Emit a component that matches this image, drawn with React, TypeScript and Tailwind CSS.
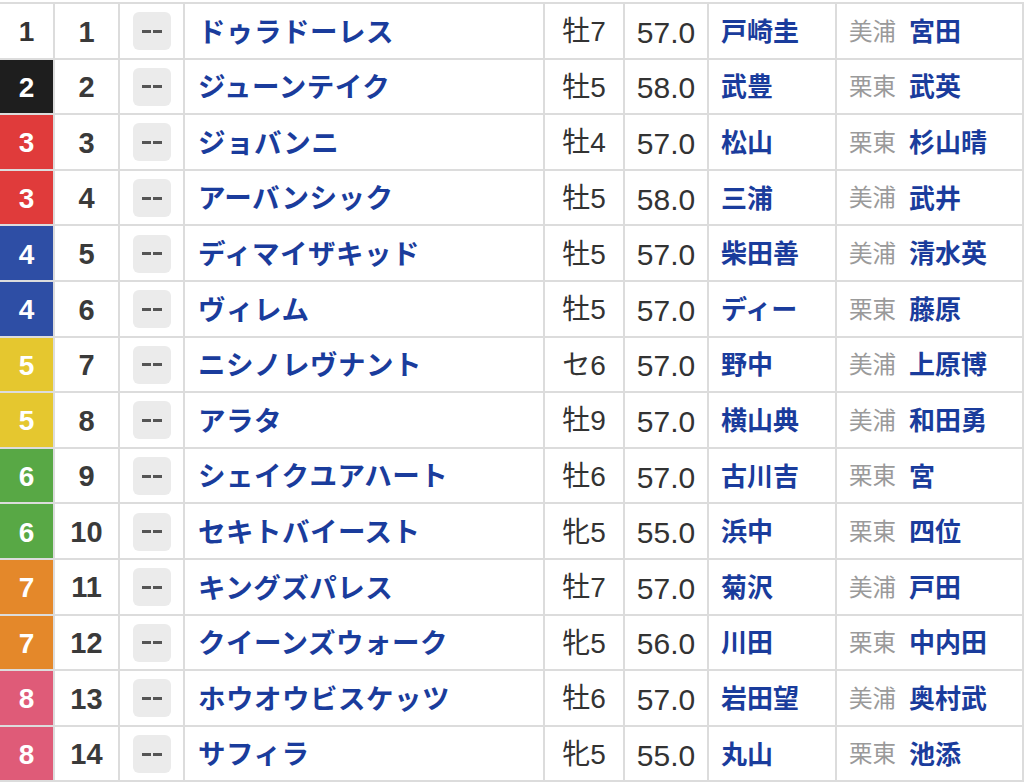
import React from 'react';

interface Horse {
  waku: number;
  num: number;
  name: string;
  sexAge: string;
  weight: string;
  jockey: string;
  region: string;
  trainer: string;
}

const horses: Horse[] = [
  { waku: 1, num: 1, name: 'ドゥラドーレス', sexAge: '牡7', weight: '57.0', jockey: '戸崎圭', region: '美浦', trainer: '宮田' },
  { waku: 2, num: 2, name: 'ジューンテイク', sexAge: '牡5', weight: '58.0', jockey: '武豊', region: '栗東', trainer: '武英' },
  { waku: 3, num: 3, name: 'ジョバンニ', sexAge: '牡4', weight: '57.0', jockey: '松山', region: '栗東', trainer: '杉山晴' },
  { waku: 3, num: 4, name: 'アーバンシック', sexAge: '牡5', weight: '58.0', jockey: '三浦', region: '美浦', trainer: '武井' },
  { waku: 4, num: 5, name: 'ディマイザキッド', sexAge: '牡5', weight: '57.0', jockey: '柴田善', region: '美浦', trainer: '清水英' },
  { waku: 4, num: 6, name: 'ヴィレム', sexAge: '牡5', weight: '57.0', jockey: 'ディー', region: '栗東', trainer: '藤原' },
  { waku: 5, num: 7, name: 'ニシノレヴナント', sexAge: 'セ6', weight: '57.0', jockey: '野中', region: '美浦', trainer: '上原博' },
  { waku: 5, num: 8, name: 'アラタ', sexAge: '牡9', weight: '57.0', jockey: '横山典', region: '美浦', trainer: '和田勇' },
  { waku: 6, num: 9, name: 'シェイクユアハート', sexAge: '牡6', weight: '57.0', jockey: '古川吉', region: '栗東', trainer: '宮' },
  { waku: 6, num: 10, name: 'セキトバイースト', sexAge: '牝5', weight: '55.0', jockey: '浜中', region: '栗東', trainer: '四位' },
  { waku: 7, num: 11, name: 'キングズパレス', sexAge: '牡7', weight: '57.0', jockey: '菊沢', region: '美浦', trainer: '戸田' },
  { waku: 7, num: 12, name: 'クイーンズウォーク', sexAge: '牝5', weight: '56.0', jockey: '川田', region: '栗東', trainer: '中内田' },
  { waku: 8, num: 13, name: 'ホウオウビスケッツ', sexAge: '牡6', weight: '57.0', jockey: '岩田望', region: '美浦', trainer: '奥村武' },
  { waku: 8, num: 14, name: 'サフィラ', sexAge: '牝5', weight: '55.0', jockey: '丸山', region: '栗東', trainer: '池添' },
];

// 枠番の色
const wakuClass: Record<number, string> = {
  1: 'bg-white text-[#333]',
  2: 'bg-[#1e1e1e] text-white',
  3: 'bg-[#e03b3b] text-white',
  4: 'bg-[#2e4ea5] text-white',
  5: 'bg-[#e5c72f] text-white',
  6: 'bg-[#58a845] text-white',
  7: 'bg-[#e4882a] text-white',
  8: 'bg-[#df5b78] text-white',
};

const font = { fontFamily: '"Liberation Sans", "Noto Sans CJK JP", sans-serif' };

const cell = 'h-full flex items-center border-r-2 border-[#dcdcdc] shrink-0';

const Row: React.FC<{ h: Horse }> = ({ h }) => (
  <div className="flex h-[55.6px] border-b-2 border-[#dcdcdc] bg-white">
    {/* 枠 */}
    <div className={`${cell} w-[55px] justify-center pt-[3px] text-[28px] font-bold ${wakuClass[h.waku]}`}>
      {h.waku}
    </div>
    {/* 馬番 */}
    <div className={`${cell} w-[65px] justify-center pt-[3px] text-[29px] font-bold text-[#3a3a3a]`}>
      {h.num}
    </div>
    {/* 印 */}
    <div className={`${cell} w-[65px] justify-center`}>
      <div className="w-[38px] h-[38px] rounded-[6px] bg-[#ebebeb] flex items-center justify-center gap-[2px] mt-[1px]">
        <span className="block w-[9px] h-[3px] bg-[#555]" />
        <span className="block w-[9px] h-[3px] bg-[#555]" />
      </div>
    </div>
    {/* 馬名 */}
    <div className={`${cell} w-[360px] pl-[13px] pt-[3px] text-[27.5px] font-bold text-[#1a3c9c] tracking-[0.5px]`}>
      {h.name}
    </div>
    {/* 性齢 */}
    <div className={`${cell} w-[80px] justify-center pt-[3px] text-[28px] text-[#333]`}>
      {h.sexAge}
    </div>
    {/* 斤量 */}
    <div className={`${cell} w-[84px] justify-center pt-[3px] text-[30px] text-[#333]`}>
      {h.weight}
    </div>
    {/* 騎手 */}
    <div className={`${cell} w-[128px] pl-[12px] pt-[3px] text-[26px] font-bold text-[#1a3c9c]`}>
      {h.jockey}
    </div>
    {/* 厩舎 */}
    <div className={`${cell} w-[187px] pl-[12px] pt-[3px] gap-[13px]`}>
      <span className="text-[23.5px] text-[#9a9a9a]">{h.region}</span>
      <span className="text-[26px] font-bold text-[#1a3c9c]">{h.trainer}</span>
    </div>
  </div>
);

export default function App() {
  return (
    <div className="w-[1027px] h-[784px] bg-white overflow-hidden pt-[2px]" style={font}>
      <div className="w-[1024px] border-t-2 border-[#dcdcdc]">
        {horses.map((h) => (
          <Row key={h.num} h={h} />
        ))}
      </div>
    </div>
  );
}
